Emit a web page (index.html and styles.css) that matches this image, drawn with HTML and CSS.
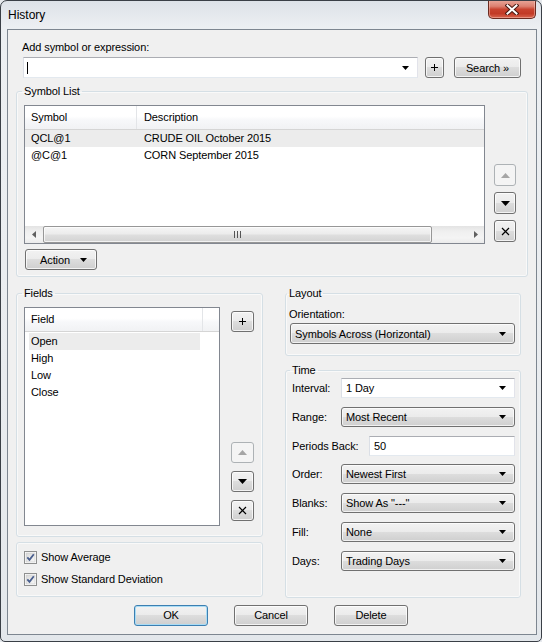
FILE: index.html
```html
<!DOCTYPE html>
<html>
<head>
<meta charset="utf-8">
<title>History</title>
<link rel="stylesheet" href="styles.css">
</head>
<body>
<div class="window">
  <div class="titlebar">
    <span class="title">History</span>
    <div class="close">
      <svg width="14" height="11" viewBox="0 0 14 11"><path d="M2.5 1.5 L11.5 9.5 M11.5 1.5 L2.5 9.5" stroke="#4a1a12" stroke-width="4" stroke-linecap="square" fill="none"/><path d="M2.5 1.5 L11.5 9.5 M11.5 1.5 L2.5 9.5" stroke="#fff" stroke-width="2" stroke-linecap="square" fill="none"/></svg>
    </div>
  </div>
  <div class="client">
    <div class="add">
      <div class="lbl">Add symbol or expression:</div>
      <div class="addrow">
        <div class="combo edit addin"><span class="caret"></span><svg class="dd" width="7" height="4" viewBox="0 0 7 4"><polygon points="0,0 7,0 3.5,4" fill="#000"/></svg></div>
        <div class="btn plus"><svg width="7" height="7" viewBox="0 0 7 7"><path d="M3.5 0 V7 M0 3.5 H7" stroke="#000" stroke-width="1"/></svg></div>
        <div class="btn search">Search »</div>
      </div>
    </div>

    <fieldset class="grp symgrp">
      <legend>Symbol List</legend>
      <div class="symrow">
        <div class="listview sym">
          <div class="lvhead">
            <div class="hc c1">Symbol</div>
            <div class="hc c2">Description</div>
          </div>
          <div class="lvbody">
            <div class="lvrow sel"><span class="c1">QCL@1</span><span class="c2">CRUDE OIL October 2015</span></div>
            <div class="lvrow"><span class="c1">@C@1</span><span class="c2">CORN September 2015</span></div>
          </div>
          <div class="hscroll">
            <div class="sarrow"><svg width="4" height="7" viewBox="0 0 4 7"><polygon points="4,0 4,7 0,3.5" fill="#606060"/></svg></div>
            <div class="thumb"><svg width="7" height="7" viewBox="0 0 7 7"><path d="M0.5 0 V7 M3.5 0 V7 M6.5 0 V7" stroke="#555" stroke-width="1"/></svg></div>
            <div class="track"></div>
            <div class="sarrow"><svg width="4" height="7" viewBox="0 0 4 7"><polygon points="0,0 0,7 4,3.5" fill="#606060"/></svg></div>
          </div>
        </div>
        <div class="side">
          <div class="btn sq dis"><svg width="9" height="5" viewBox="0 0 9 5"><polygon points="0,5 9,5 4.5,0" fill="#a5a5a5"/></svg></div>
          <div class="btn sq"><svg width="9" height="5" viewBox="0 0 9 5"><polygon points="0,0 9,0 4.5,5" fill="#000"/></svg></div>
          <div class="btn sq"><svg width="9" height="9" viewBox="0 0 9 9"><path d="M1 1 L8 8 M8 1 L1 8" stroke="#000" stroke-width="1.2"/></svg></div>
        </div>
      </div>
      <div class="btn action"><span>Action</span><svg width="7" height="4" viewBox="0 0 7 4"><polygon points="0,0 7,0 3.5,4" fill="#000"/></svg></div>
    </fieldset>

    <div class="cols">
      <div class="leftcol">
        <fieldset class="grp fields">
          <legend>Fields</legend>
          <div class="fieldrow">
            <div class="listview fl">
              <div class="lvhead">
                <div class="hc f1">Field</div>
                <div class="hc f2"></div>
              </div>
              <div class="lvbody">
                <div class="lvrow"><span class="fitem sel">Open</span></div>
                <div class="lvrow"><span class="fitem">High</span></div>
                <div class="lvrow"><span class="fitem">Low</span></div>
                <div class="lvrow"><span class="fitem">Close</span></div>
              </div>
            </div>
            <div class="fside">
              <div class="btn sq2"><svg width="7" height="7" viewBox="0 0 7 7"><path d="M3.5 0 V7 M0 3.5 H7" stroke="#000" stroke-width="1"/></svg></div>
              <div class="fbtns">
                <div class="btn sq2 dis"><svg width="9" height="5" viewBox="0 0 9 5"><polygon points="0,5 9,5 4.5,0" fill="#a5a5a5"/></svg></div>
                <div class="btn sq2"><svg width="9" height="5" viewBox="0 0 9 5"><polygon points="0,0 9,0 4.5,5" fill="#000"/></svg></div>
                <div class="btn sq2"><svg width="9" height="9" viewBox="0 0 9 9"><path d="M1 1 L8 8 M8 1 L1 8" stroke="#000" stroke-width="1.2"/></svg></div>
              </div>
            </div>
          </div>
        </fieldset>
        <div class="grp checks">
          <div class="chk"><svg width="13" height="13" viewBox="0 0 13 13"><defs><linearGradient id="cg" x1="0" y1="0" x2="1" y2="1"><stop offset="0" stop-color="#d8d8d8"/><stop offset="1" stop-color="#f8f8f8"/></linearGradient></defs><rect x="0.5" y="0.5" width="12" height="12" fill="#fff" stroke="#8e8f8f"/><rect x="2" y="2" width="9" height="9" fill="url(#cg)" stroke="#c9c9c9" stroke-width="0.6"/><path d="M3.3 6.3 L5.5 8.8 L9.8 3.2" stroke="#4a5f8e" stroke-width="1.8" fill="none"/></svg><span>Show Average</span></div>
          <div class="chk"><svg width="13" height="13" viewBox="0 0 13 13"><rect x="0.5" y="0.5" width="12" height="12" fill="#fff" stroke="#8e8f8f"/><rect x="2" y="2" width="9" height="9" fill="url(#cg)" stroke="#c9c9c9" stroke-width="0.6"/><path d="M3.3 6.3 L5.5 8.8 L9.8 3.2" stroke="#4a5f8e" stroke-width="1.8" fill="none"/></svg><span>Show Standard Deviation</span></div>
        </div>
      </div>

      <div class="rightcol">
        <fieldset class="grp layout">
          <legend>Layout</legend>
          <div class="olbl">Orientation:</div>
          <div class="combo ro orient"><span>Symbols Across (Horizontal)</span><svg width="7" height="4" viewBox="0 0 7 4"><polygon points="0,0 7,0 3.5,4" fill="#000"/></svg></div>
        </fieldset>
        <fieldset class="grp time">
          <legend>Time</legend>
          <div class="tgrid">
            <div class="tl">Interval:</div>
            <div class="combo edit tc"><span>1 Day</span><svg width="7" height="4" viewBox="0 0 7 4"><polygon points="0,0 7,0 3.5,4" fill="#000"/></svg></div>
            <div class="tl">Range:</div>
            <div class="combo ro tc"><span>Most Recent</span><svg width="7" height="4" viewBox="0 0 7 4"><polygon points="0,0 7,0 3.5,4" fill="#000"/></svg></div>
            <div class="tl pb">Periods Back:</div>
            <div class="combo edit tin"><span>50</span></div>
            <div class="tl">Order:</div>
            <div class="combo ro tc"><span>Newest First</span><svg width="7" height="4" viewBox="0 0 7 4"><polygon points="0,0 7,0 3.5,4" fill="#000"/></svg></div>
            <div class="tl">Blanks:</div>
            <div class="combo ro tc"><span>Show As "---"</span><svg width="7" height="4" viewBox="0 0 7 4"><polygon points="0,0 7,0 3.5,4" fill="#000"/></svg></div>
            <div class="tl">Fill:</div>
            <div class="combo ro tc"><span>None</span><svg width="7" height="4" viewBox="0 0 7 4"><polygon points="0,0 7,0 3.5,4" fill="#000"/></svg></div>
            <div class="tl">Days:</div>
            <div class="combo ro tc"><span>Trading Days</span><svg width="7" height="4" viewBox="0 0 7 4"><polygon points="0,0 7,0 3.5,4" fill="#000"/></svg></div>
          </div>
        </fieldset>
      </div>
    </div>

    <div class="footer">
      <div class="btn fb def">OK</div>
      <div class="btn fb">Cancel</div>
      <div class="btn fb">Delete</div>
    </div>
  </div>
</div>
</body>
</html>
```

FILE: styles.css
```css
* { box-sizing: border-box; }
html, body { margin: 0; padding: 0; }
body {
  width: 542px; height: 642px; overflow: hidden;
  font-family: "Liberation Sans", Arial, sans-serif;
  font-size: 11px; color: #000;
  letter-spacing: -0.1px;
  background: #e6e9ed;
}
.window {
  width: 542px; height: 642px;
  border: 1px solid #3a3f46;
  border-radius: 7px 7px 5px 5px;
  background: linear-gradient(180deg, #dde2e8 0, #eceff2 26px, #e9ecef 60%, #e3e7eb 100%);
  display: flex; flex-direction: column;
  overflow: hidden;
}
.titlebar {
  height: 28px; flex: none;
  display: flex; justify-content: space-between; align-items: flex-start;
  padding-left: 7px;
}
.title { font-size: 12px; line-height: 14px; margin-top: 7px; letter-spacing: 0; }
.close {
  width: 48px; height: 19px; margin-right: 5px; margin-top: -1px;
  border: 1px solid #6a2a20; border-top: none;
  border-radius: 0 0 5px 5px;
  background: linear-gradient(180deg, #e9a99b 0, #dc8070 35%, #c8432f 52%, #c23a26 75%, #d8644e 100%);
  box-shadow: inset 0 0 0 1px rgba(255,210,200,0.45);
  display: flex; align-items: center; justify-content: center;
}
.client {
  flex: 1;
  margin: 0 4px 6px 6px;
  border: 1px solid #7d8690;
  background: #f0f0f0;
  display: flex; flex-direction: column;
}

/* generic controls */
.btn {
  border: 1px solid #707070; border-radius: 3px;
  background: linear-gradient(180deg, #f2f2f2 0, #ebebeb 50%, #dddddd 50%, #cfcfcf 100%);
  box-shadow: inset 0 0 0 1px rgba(255,255,255,0.75);
  display: flex; align-items: center; justify-content: center;
  line-height: 14px;
}
.btn.dis {
  border-color: #adb2b5;
  background: #f4f4f4;
  box-shadow: none;
}
.combo {
  height: 20px;
  display: flex; align-items: center; justify-content: space-between;
  padding: 0 8px 0 4px;
  line-height: 14px;
}
.combo.edit {
  background: #fff;
  border: 1px solid; border-color: #abadb3 #e2e3ea #e3e9ef #dbdfe6;
}
.combo.ro {
  border: 1px solid #707070; border-radius: 3px;
  background: linear-gradient(180deg, #f2f2f2 0, #ebebeb 50%, #dddddd 50%, #cfcfcf 100%);
  box-shadow: inset 0 0 0 1px rgba(255,255,255,0.7);
}

.grp {
  margin: 0; min-width: 0;
  border: 1px solid #d5dfe5; border-radius: 3px;
  box-shadow: inset 0 0 0 1px rgba(255,255,255,0.6);
}
fieldset.grp legend {
  padding: 0 2px; margin-left: -2px;
  line-height: 14px;
}

/* add row */
.add { padding: 10px 0 0 15px; }
.lbl { line-height: 14px; margin-left: -1px; margin-bottom: 3px; }
.addrow { display: flex; height: 21px; }
.addin { width: 395px; height: 21px; padding-left: 3px; }
.caret { width: 1px; height: 12px; background: #000; }
.btn.plus { width: 19px; height: 21px; margin-left: 7px; }
.btn.search { width: 67px; height: 21px; margin-left: 10px; }

/* symbol list */
.symgrp { margin: 6px 8px 0 8px; padding: 7px 7px 6px 7px; }
.symrow { display: flex; }
.listview {
  border: 1px solid #828790; background: #fff;
  display: flex; flex-direction: column;
}
.listview.sym { width: 461px; height: 139px; }
.lvhead {
  height: 24px; flex: none; display: flex;
  background: linear-gradient(180deg, #ffffff 0, #ffffff 45%, #f7f8fa 60%, #f1f2f4 100%);
  border-bottom: 1px solid #d5d5d5;
}
.hc { line-height: 22px; padding-left: 6px; border-right: 1px solid #e3e5e8; }
.sym .hc.c1 { width: 112px; }
.sym .hc.c2 { flex: 1; border-right: none; padding-left: 7px; }
.lvbody { flex: 1; }
.lvrow { height: 17px; line-height: 17px; display: flex; }
.sym .lvrow .c1 { width: 112px; padding-left: 6px; }
.sym .lvrow .c2 { padding-left: 7px; }
.sym .lvrow.sel { background: #ececec; }
.hscroll {
  height: 17px; flex: none; display: flex; align-items: stretch;
  background: linear-gradient(180deg, #e3e3e3 0, #efefef 30%, #f4f4f4 70%, #ebebeb 100%);
}
.sarrow { width: 17px; display: flex; align-items: center; justify-content: center; }
.thumb {
  width: 389px; margin: 0 0 0 1px;
  border: 1px solid #979797; border-radius: 2px;
  background: linear-gradient(180deg, #f5f5f5 0, #ececec 45%, #dedede 55%, #d2d2d2 100%);
  box-shadow: inset 0 0 0 1px rgba(255,255,255,0.7);
  display: flex; align-items: center; justify-content: center;
}
.track { flex: 1; }
.side {
  margin-left: 9px; width: 22px;
  display: flex; flex-direction: column; justify-content: flex-end; gap: 6px;
  padding-bottom: 2px;
}
.btn.sq { width: 22px; height: 22px; }
.btn.action {
  width: 72px; height: 21px; margin: 5px 0 0 1px;
  justify-content: space-between; padding: 0 9px 0 14px;
}

/* bottom columns */
.cols { display: flex; gap: 22px; margin-left: 8px; }
.leftcol { width: 247px; display: flex; flex-direction: column; }
.rightcol { width: 236px; display: flex; flex-direction: column; }

.fields { margin-top: 9px; padding: 7px 8px 10px 7px; }
.fieldrow { display: flex; }
.listview.fl { width: 196px; height: 219px; }
.fl .hc.f1 { width: 178px; padding-left: 6px; }
.fl .hc.f2 { flex: 1; border-right: none; }
.fitem { width: 171px; margin-left: 4px; padding-left: 2px; }
.fitem.sel { background: #ececec; }
.fl .lvbody { padding-top: 1px; }
.fside {
  margin-left: 11px; width: 23px;
  display: flex; flex-direction: column; justify-content: space-between;
  padding: 4px 0 5px 0;
}
.fbtns { display: flex; flex-direction: column; gap: 8px; }
.btn.sq2 { width: 23px; height: 21px; }

.checks { margin-top: 5px; height: 55px; padding: 3px 0 6px 7px; }
.chk { height: 22px; display: flex; align-items: center; gap: 4px; }

.layout { margin-top: 9px; padding: 7px 5px 11px 3px; }
.layout legend { margin-left: 2px; }
.olbl { line-height: 14px; margin-bottom: 2px; }
.orient { height: 21px; width: 225px; margin-left: 1px; }

.time { margin-top: 7px; padding: 1px 5px 26px 6px; }
.time legend { margin-left: -1px; }
.tgrid {
  display: grid; grid-template-columns: 49px 1fr;
  grid-auto-rows: 20px; row-gap: 8.8px;
  align-items: center;
}
.tl { line-height: 14px; }
.tl.pb { white-space: nowrap; }
.tc { width: 174px; }
.tin { width: 146px; justify-self: end; padding-left: 4px; }

.footer { display: flex; gap: 26px; padding-left: 126px; margin-top: 7px; }
.btn.fb { width: 74px; height: 21px; }
.btn.def {
  border-color: #3c7fb1;
  box-shadow: inset 0 0 0 1px #a9dcf5;
}
```
